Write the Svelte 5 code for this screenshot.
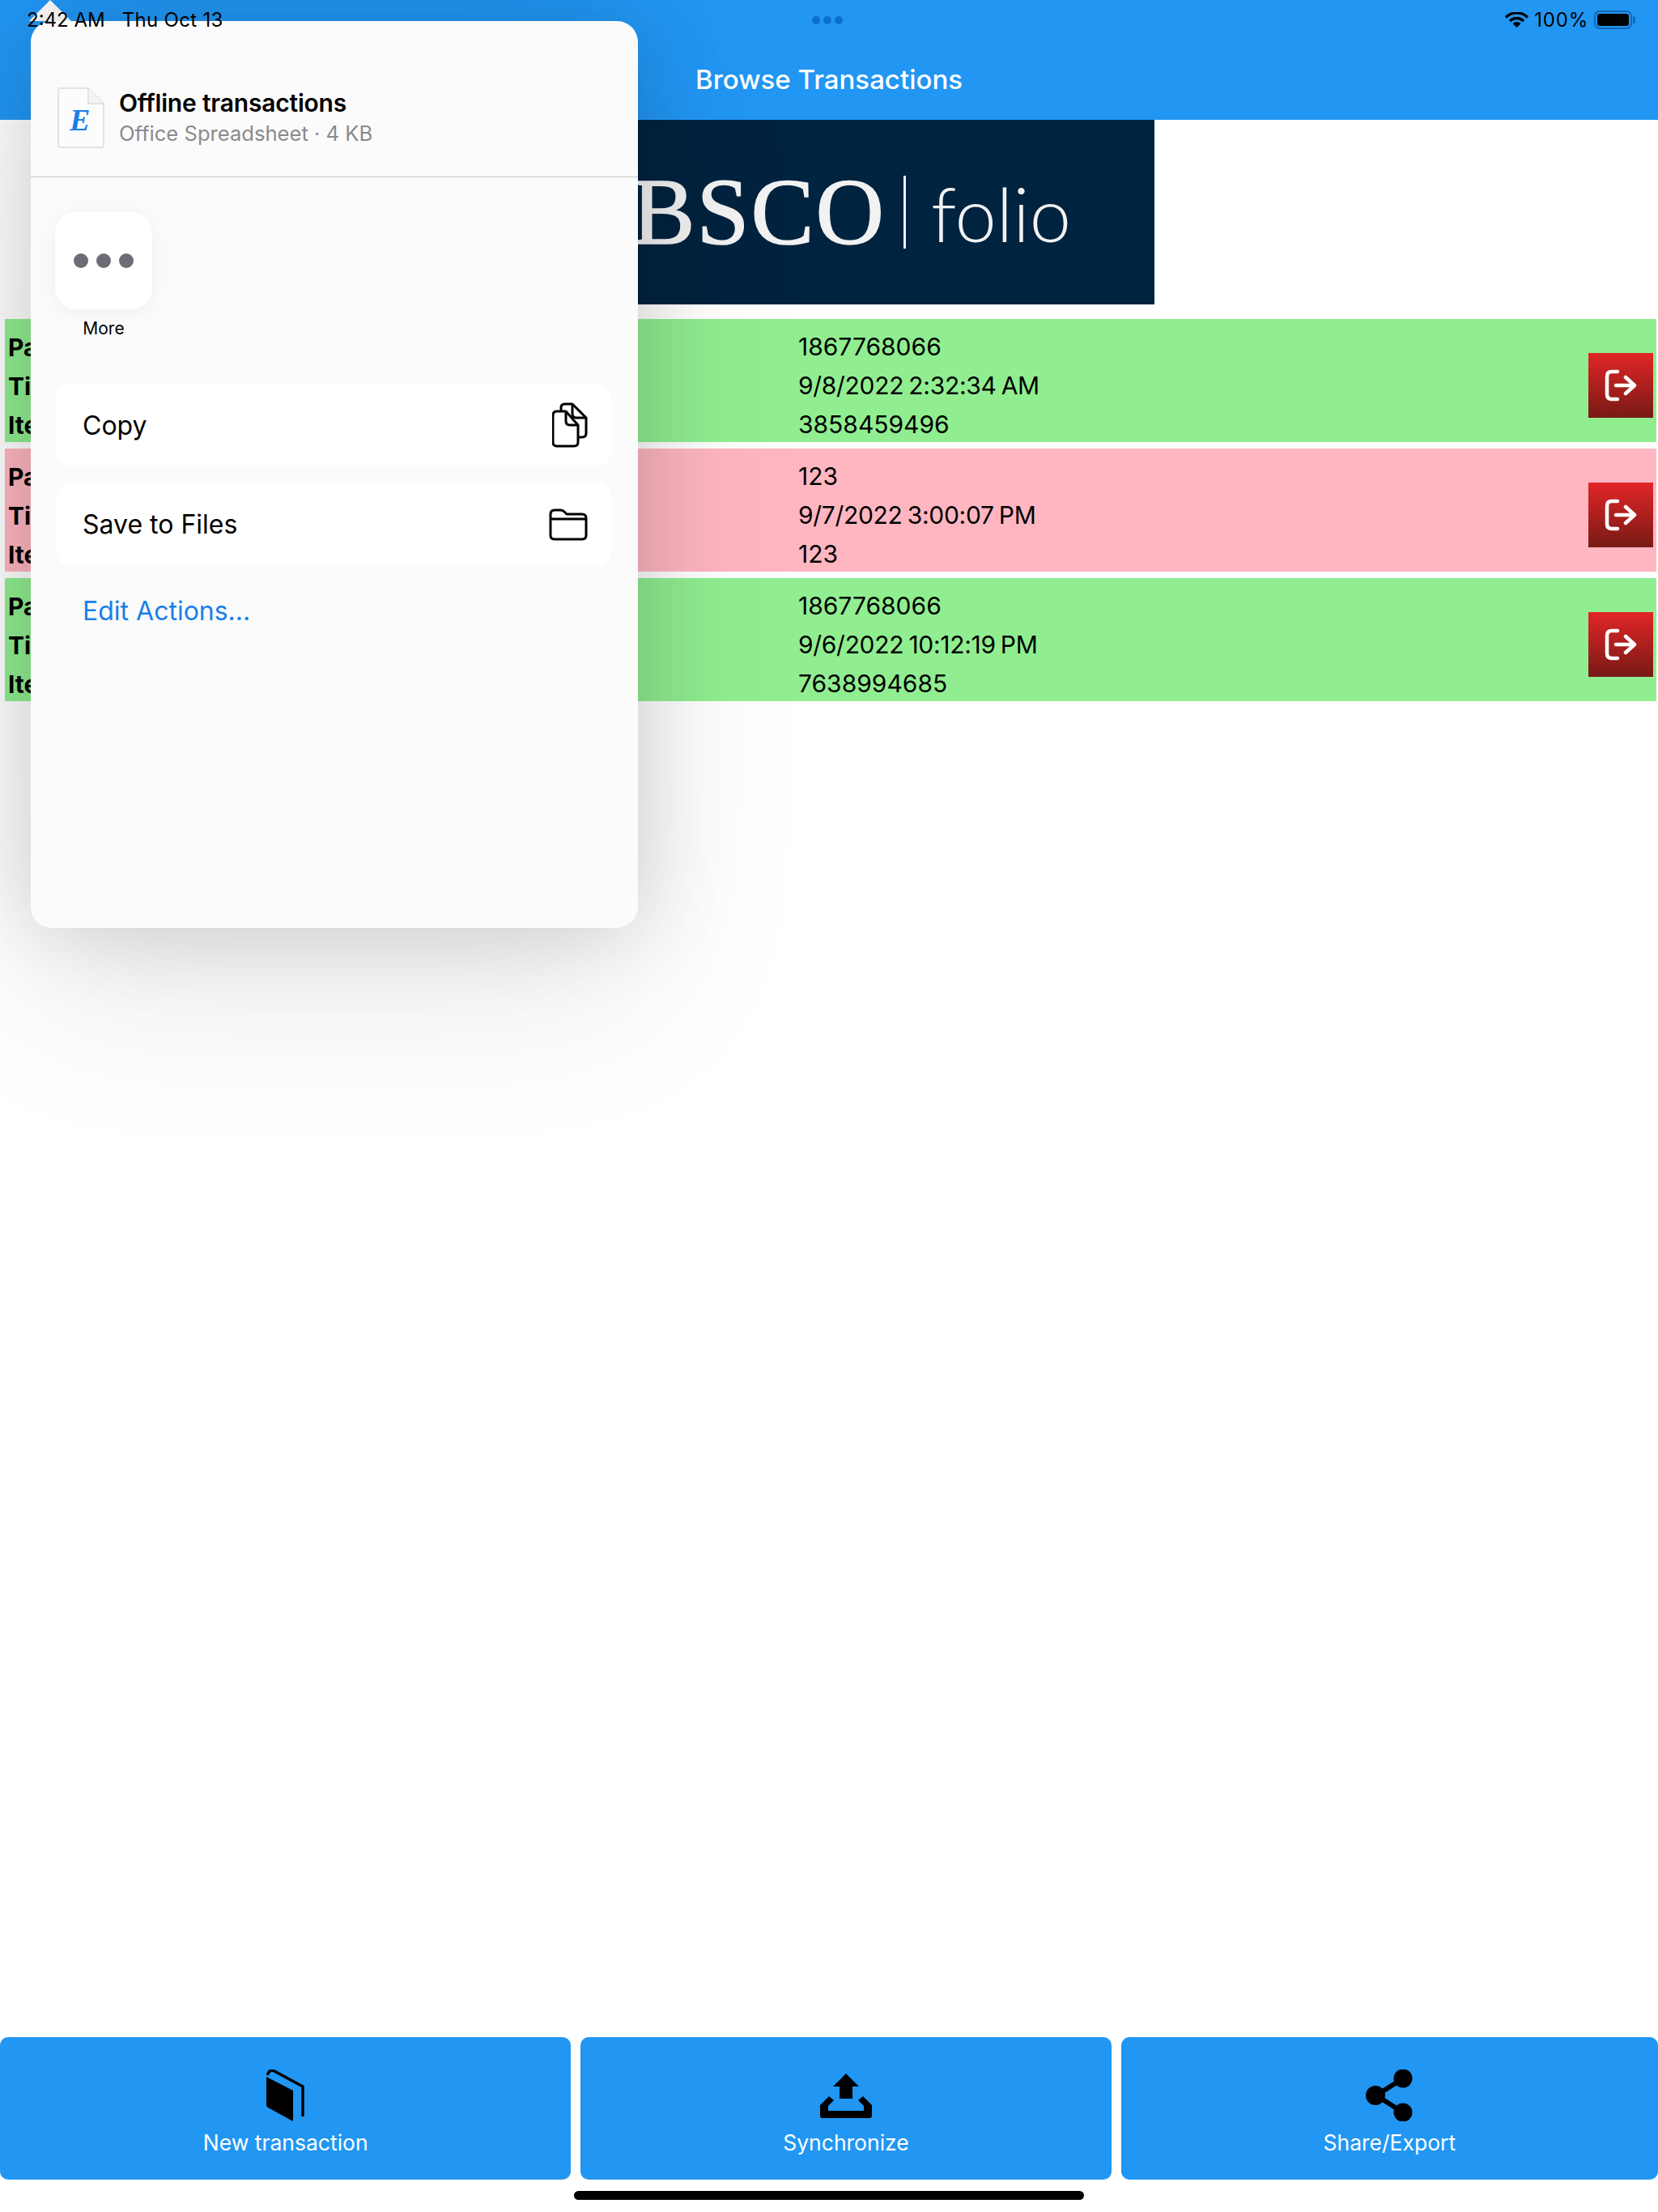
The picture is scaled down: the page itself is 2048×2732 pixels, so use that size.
<script>
	const rows = [
		{ status: "ok", patron: "1867768066", time: "9/8/2022 2:32:34 AM", item: "3858459496" },
		{ status: "bad", patron: "123", time: "9/7/2022 3:00:07 PM", item: "123" },
		{ status: "ok", patron: "1867768066", time: "9/6/2022 10:12:19 PM", item: "7638994685" },
	];
</script>

<div class="page">
	<header class="topbar">
		<div class="status">
			<span class="clock">2:42 AM</span>
			<span class="date">Thu Oct 13</span>
			<span class="multi"><i></i><i></i><i></i></span>
			<span class="right">
				<svg class="wifi" viewBox="0 0 29 19" width="29" height="19">
					<path d="M1 6.5a19 19 0 0 1 27 0" fill="none" stroke="#000" stroke-width="3.4" />
					<path d="M6 11a12 12 0 0 1 17 0" fill="none" stroke="#000" stroke-width="3.4" />
					<path d="M14.5 19l-5-5a7 7 0 0 1 10 0z" fill="#000" />
				</svg>
				<span class="pct">100%</span>
				<span class="battery"><b></b></span>
			</span>
		</div>
		<h1>Browse Transactions</h1>
	</header>

	<div class="logo">
		<span class="ebsco">EBSCO</span>
		<span class="rule"></span>
		<span class="folio">folio</span>
	</div>

	<div class="rows">
		{#each rows as row}
			<div class="row {row.status}">
				<div class="labels">
					<div>Patron</div>
					<div>Time</div>
					<div>Item</div>
				</div>
				<div class="values">
					<div>{row.patron}</div>
					<div class="time">{row.time}</div>
					<div>{row.item}</div>
				</div>
				<button class="exit" aria-label="Open">
					<svg viewBox="0 0 40 40" width="40" height="40" fill="none" stroke="#fff" stroke-width="4.5" stroke-linecap="round" stroke-linejoin="round">
						<path d="M16 3H9Q3 3 3 9V31Q3 37 9 37H16" />
						<path d="M14 20H36M26 10L37 20L26 30" />
					</svg>
				</button>
			</div>
		{/each}
	</div>

	<nav class="actions">
		<button>
			<svg viewBox="0 0 47 64" width="47" height="64">
				<path d="M0 9L33 26V64L2 47Q0 46 0 44Z" fill="#000" />
				<path d="M1.5 7Q3 0 9 1.5L45 21V58" fill="none" stroke="#000" stroke-width="3.5" />
			</svg>
			<span>New transaction</span>
		</button>
		<button>
			<svg viewBox="0 0 64 64" width="64" height="64">
				<path d="M32 5L48 21H40V36H24V21H16Z" fill="#000" />
				<path d="M11 33L0 44V57Q0 60 3 60H61Q64 60 64 57V44L53 33L47 38L54 45V51H10V45L17 38Z" fill="#000" />
			</svg>
			<span>Synchronize</span>
		</button>
		<button>
			<svg viewBox="0 0 58 64" width="58" height="64">
				<path d="M46 11L13 32L46 53" fill="none" stroke="#000" stroke-width="6" />
				<circle cx="46" cy="11" r="11.5" fill="#000" />
				<circle cx="12" cy="32" r="12" fill="#000" />
				<circle cx="46" cy="53" r="11.5" fill="#000" />
			</svg>
			<span>Share/Export</span>
		</button>
	</nav>
	<div class="home"></div>

	<div class="arrow"></div>
	<aside class="sheet">
		<div class="sheet-head">
			<div class="doc">
				<svg viewBox="0 0 58 75" width="58" height="75">
					<path d="M3 1H38L57 20V71Q57 74 54 74H4Q1 74 1 71V3Q1 1 3 1Z" fill="#fcfcfc" stroke="#e2e2e2" stroke-width="2" />
					<path d="M38 1V20H57" fill="#f4f4f4" stroke="#e2e2e2" stroke-width="2" />
				</svg>
				<span>E</span>
			</div>
			<div class="doc-text">
				<div class="doc-title">Offline transactions</div>
				<div class="doc-sub">Office Spreadsheet · 4 KB</div>
			</div>
		</div>

		<div class="tile"><i></i><i></i><i></i></div>
		<div class="tile-label">More</div>

		<div class="card copy">
			<span>Copy</span>
			<svg viewBox="0 0 44 56" width="44" height="56" fill="none" stroke="#000" stroke-width="3" stroke-linejoin="round">
				<path d="M11 10V6Q11 2 16 2H25L42 19V38Q42 43 37 43H33" />
				<path d="M25 2V14Q25 19 30 19H42" />
				<path d="M6 11H17L32 28V49Q32 54 27 54H6Q1 54 1 49V16Q1 11 6 11Z" fill="#fff" />
				<path d="M17 11V23Q17 28 22 28H32" />
			</svg>
		</div>
		<div class="card save">
			<span>Save to Files</span>
			<svg viewBox="0 0 48 40" width="48" height="40" fill="none" stroke="#000" stroke-width="3" stroke-linejoin="round">
				<path d="M2 10V7Q2 2 7 2H14Q17 2 19 4L22 7H41Q46 7 46 12V33Q46 38 41 38H7Q2 38 2 33Z" />
				<path d="M2 13H46" />
			</svg>
		</div>
		<div class="edit">Edit Actions...</div>
	</aside>
</div>

<style>
	:global(body) {
		margin: 0;
		background: #fff;
	}
	.page {
		position: relative;
		display: flex;
		flex-direction: column;
		height: 2732px;
		overflow: hidden;
		font-family: Inter, "Noto Sans", sans-serif;
		color: #000;
	}
	.topbar {
		height: 148px;
		background: #2196f3;
		flex: none;
	}
	.status {
		position: relative;
		z-index: 3;
		display: flex;
		align-items: center;
		height: 48px;
		padding: 0 32px 0 33px;
		font-size: 24px;
	}
	.date {
		margin-left: 21px;
		letter-spacing: 0.3px;
	}
	.multi {
		position: absolute;
		left: 1003px;
		top: 20px;
		display: flex;
		gap: 4px;
	}
	.multi i {
		width: 10px;
		height: 10px;
		border-radius: 50%;
		background: #0c6fd0;
	}
	.right {
		margin-left: auto;
		display: flex;
		align-items: center;
		gap: 7px;
	}
	.pct {
		letter-spacing: 0.8px;
	}
	.battery {
		display: block;
		position: relative;
		width: 47px;
		height: 23px;
		box-sizing: border-box;
		border: 2px solid #1266b8;
		border-radius: 7px;
		padding: 2px;
	}
	.battery b {
		display: block;
		height: 100%;
		background: #000;
		border-radius: 3px;
	}
	.battery::after {
		content: "";
		position: absolute;
		right: -6px;
		top: 5px;
		width: 3px;
		height: 9px;
		background: #1266b8;
		border-radius: 0 3px 3px 0;
	}
	h1 {
		margin: 0;
		text-align: center;
		color: #fff;
		font-size: 33px;
		font-weight: 500;
		line-height: 100px;
	}
	.logo {
		flex: none;
		box-sizing: border-box;
		height: 228px;
		width: 1000px;
		margin-left: 426px;
		padding-right: 103px;
		background: #00233f;
		color: #f2f2f2;
		display: flex;
		align-items: center;
		justify-content: flex-end;
	}
	.ebsco {
		font-family: "Liberation Serif", serif;
		font-size: 117px;
		letter-spacing: 2px;
		-webkit-text-stroke: 1.5px #f2f2f2;
	}
	.rule {
		width: 3px;
		height: 90px;
		background: #f2f2f2;
		margin: 0 31px 0 22px;
	}
	.folio {
		font-family: Lato, sans-serif;
		font-weight: 300;
		font-size: 92px;
		margin-top: 2px;
	}
	.rows {
		flex: none;
		margin: 18px 2px 0 6px;
		display: flex;
		flex-direction: column;
		gap: 8px;
	}
	.row {
		display: grid;
		grid-template-columns: 980px 1fr 80px;
		height: 152px;
		padding-right: 4px;
		font-size: 30px;
		line-height: 48px;
		box-sizing: border-box;
	}
	.row.ok {
		background: #90ee90;
	}
	.row.bad {
		background: #ffb6c1;
	}
	.labels {
		padding: 11px 0 0 4px;
		font-weight: 700;
	}
	.values {
		padding-top: 10px;
	}
	.time {
		letter-spacing: -0.3px;
		word-spacing: -2px;
	}
	.exit {
		align-self: start;
		margin-top: 42px;
		width: 80px;
		height: 80px;
		padding: 0;
		border: 0;
		background: linear-gradient(#e22526, #771a15);
		display: flex;
		align-items: center;
		justify-content: center;
	}
	.actions {
		margin-top: auto;
		flex: none;
		display: grid;
		grid-template-columns: 705fr 655fr 663fr;
		gap: 12px;
		height: 176px;
	}
	.actions button {
		border: 0;
		padding: 40px 0 0;
		background: #2196f3;
		border-radius: 10px;
		display: flex;
		flex-direction: column;
		align-items: center;
		color: #fff;
		font-family: inherit;
		font-size: 26.5px;
		line-height: 34px;
	}
	.actions span {
		margin-top: 9px;
	}
	.home {
		flex: none;
		width: 630px;
		height: 11px;
		margin: 14px 0 15px 709px;
		background: #000;
		border-radius: 6px;
	}
	.arrow {
		position: absolute;
		z-index: 2;
		left: 36px;
		top: 0;
		width: 52px;
		height: 26px;
		background: #fbfbfb;
		clip-path: polygon(50% 0, 100% 100%, 0 100%);
	}
	.sheet {
		position: absolute;
		z-index: 2;
		left: 38px;
		top: 26px;
		width: 750px;
		height: 1120px;
		box-sizing: border-box;
		background: #fbfbfb;
		border-radius: 26px;
		box-shadow: 0 0 110px rgba(0, 0, 0, 0.15), 0 70px 220px rgba(0, 0, 0, 0.1);
	}
	.sheet-head {
		display: flex;
		height: 193px;
		box-sizing: border-box;
		padding: 82px 0 0 33px;
		border-bottom: 1px solid #c6c6c8;
	}
	.doc {
		position: relative;
		width: 58px;
		height: 75px;
	}
	.doc span {
		position: absolute;
		left: 15px;
		top: 18px;
		font-family: "Liberation Serif", serif;
		font-style: italic;
		font-weight: 700;
		font-size: 38px;
		line-height: 44px;
		color: #1a7fe8;
	}
	.doc-text {
		margin-left: 18px;
	}
	.doc-title {
		font-size: 30px;
		font-weight: 600;
		line-height: 40px;
		letter-spacing: -0.2px;
		margin-top: -1px;
	}
	.doc-sub {
		font-size: 25.6px;
		line-height: 36px;
		color: #8a8a8e;
	}
	.tile {
		width: 120px;
		height: 120px;
		margin: 43px 0 0 30px;
		background: #fff;
		border-radius: 26px;
		box-shadow: 0 4px 24px rgba(0, 0, 0, 0.05);
		display: flex;
		align-items: center;
		justify-content: center;
		gap: 10px;
	}
	.tile i {
		width: 18px;
		height: 18px;
		border-radius: 50%;
		background: #6d6c74;
	}
	.tile-label {
		width: 120px;
		margin: 10px 0 0 30px;
		text-align: center;
		font-size: 21px;
		line-height: 28px;
	}
	.card {
		margin: 0 33px 0 31px;
		background: #fff;
		border-radius: 20px;
		display: flex;
		align-items: center;
		justify-content: space-between;
		padding: 0 29px 0 33px;
		font-size: 32px;
	}
	.copy {
		height: 102px;
		margin-top: 54px;
	}
	.save {
		height: 105px;
		margin-top: 19px;
	}
	.edit {
		margin: 35px 0 0 64px;
		font-size: 32px;
		line-height: 40px;
		color: #1a7fe8;
	}
</style>
